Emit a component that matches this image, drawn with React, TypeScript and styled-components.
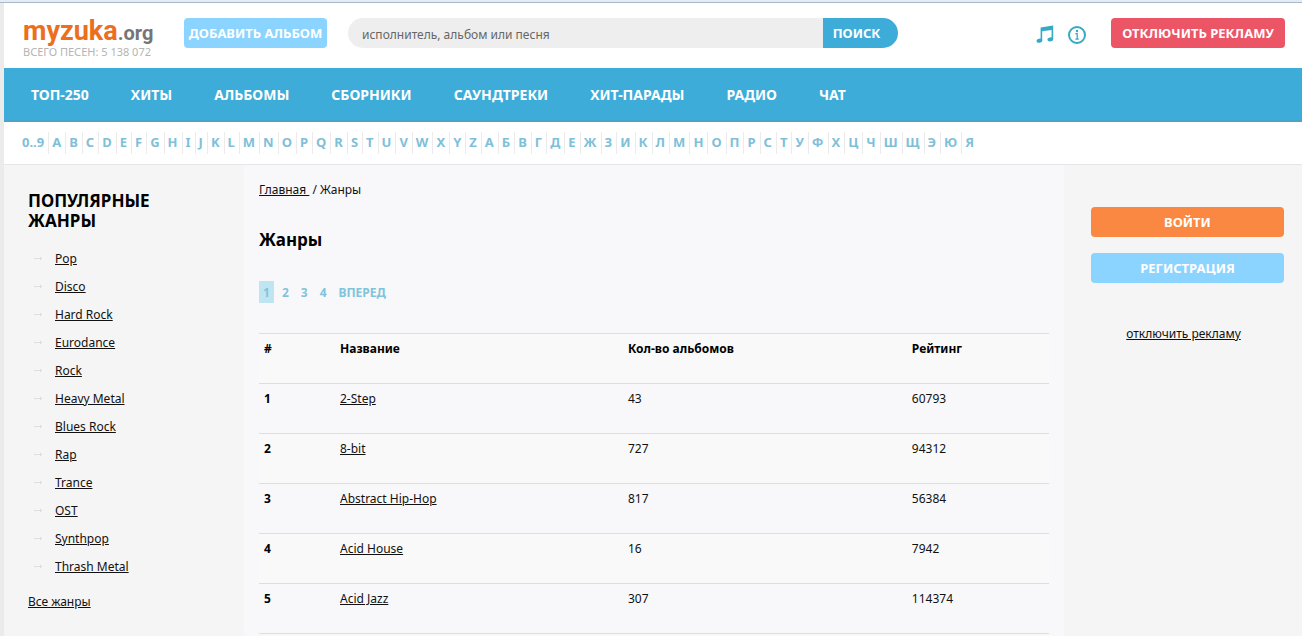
import React from 'react';
import styled, { createGlobalStyle } from 'styled-components';

const GlobalStyle = createGlobalStyle`
  *, *::before, *::after { box-sizing: border-box; }
  html, body { margin: 0; padding: 0; }
  html { overflow: hidden; }
  body {
    background: #f5f5f5;
    color: #111;
    font: 12px/18px "Noto Sans", "Open Sans", sans-serif;
  }
  a { color: inherit; }
  button, input { font-family: inherit; }
`;

const Page = styled.div`
  min-height: 100vh;
  display: flex;
  flex-direction: column;
  border-left: 4px solid #ebebeb;
`;

const WindowEdge = styled.div`
  height: 3px;
  margin-left: -4px;
  background: #e4ebf3;
  border-bottom: 1px solid #a9b8cb;
`;

const Header = styled.header`
  display: flex;
  align-items: flex-start;
  height: 65px;
  padding: 15px 17px 0 19px;
  background: #fff;
`;

const Brand = styled.div`
  width: 161px;
  flex: none;
`;

const Logo = styled.a`
  display: block;
  height: 28px;
  color: #ec6f20;
  font: bold 27px/26px Roboto, "Open Sans", sans-serif;
  text-decoration: none;
  white-space: nowrap;
`;

const LogoSuffix = styled.span`
  color: #757575;
  font-size: 20px;
`;

const SongCount = styled.div`
  color: #b4b4b4;
  font-size: 11px;
  line-height: 12px;
  white-space: nowrap;
`;

const Button = styled.button<{ $color: string; $width?: string }>`
  width: ${({ $width }) => $width ?? '100%'};
  height: 30px;
  flex: none;
  padding: 0;
  border: 0;
  border-radius: 4px;
  background: ${({ $color }) => $color};
  color: #fff;
  font-size: 13px;
  font-weight: 700;
  line-height: 30px;
  text-align: center;
  white-space: nowrap;
  cursor: pointer;
`;

const Search = styled.form`
  display: flex;
  width: 550px;
  height: 30px;
  margin-left: 21px;
  border-radius: 15px;
  overflow: hidden;
`;

const SearchInput = styled.input`
  flex: 1;
  min-width: 0;
  padding: 2px 14px 0;
  border: 0;
  background: #eee;
  font-size: 12px;
  &::placeholder { color: #666; opacity: 1; }
`;

const SearchButton = styled.button`
  width: 75px;
  padding: 0 8px 0 0;
  border: 0;
  background: #3eacd9;
  color: #fff;
  font-size: 13px;
  font-weight: 700;
  cursor: pointer;
`;

const HeaderTools = styled.div`
  display: flex;
  align-items: flex-start;
  margin-left: auto;
`;

const IconLink = styled.a`
  display: block;
  height: 20px;
  margin: 7px 13px 0 0;
  & + & { margin-right: 24px; }
  svg { display: block; }
`;

const Nav = styled.nav`
  display: flex;
  gap: 42px;
  height: 54px;
  padding: 0 27px;
  background: #3eacd9;
  border-bottom: 2px solid #4ba3c9;
`;

const NavLink = styled.a`
  color: #fff;
  font-size: 14px;
  font-weight: 700;
  line-height: 54px;
  text-decoration: none;
  white-space: nowrap;
`;

const Alphabet = styled.nav`
  display: flex;
  height: 43px;
  padding: 10px 14px 0;
  background: #fff;
  border-bottom: 1px solid #e6e6ea;
`;

const Letter = styled.a`
  height: 22px;
  padding: 0 4px 0 3px;
  border-left: 1px solid #ebebeb;
  color: #7fc0d8;
  font-size: 13px;
  font-weight: 700;
  line-height: 20px;
  text-decoration: none;
  &:first-child { border-color: transparent; }
`;

const Content = styled.div`
  display: flex;
  flex: 1;
`;

const Sidebar = styled.aside`
  width: 240px;
  flex: none;
  padding: 26px 24px;
`;

const SidebarTitle = styled.h2`
  margin: 0 0 14px;
  padding-right: 56px;
  color: #000;
  font-size: 17px;
  line-height: 20px;
`;

const GenreList = styled.ul`
  margin: 0;
  padding: 0;
  list-style: none;
`;

const GenreItem = styled.li`
  display: flex;
  align-items: center;
  gap: 12px;
  height: 28px;
  padding-left: 5px;
  svg { flex: none; }
`;

const AllGenres = styled.a`
  display: inline-block;
  margin-top: 12px;
`;

const Main = styled.main`
  flex: 1;
  min-width: 0;
  padding: 16px 15px 0;
  background: #f8f8fb;
`;

const Crumbs = styled.nav`
  a { white-space: pre; }
`;

const Title = styled.h1`
  margin: 29px 0 0;
  color: #000;
  font-size: 17px;
  line-height: 24px;
`;

const Pager = styled.nav`
  display: flex;
  gap: 4px;
  margin: 29px 0 30px;
`;

const PageLink = styled.a<{ $current?: boolean }>`
  height: 22px;
  padding: 0 4px;
  background: ${({ $current }) => ($current ? '#bfe5f3' : 'transparent')};
  color: #7fc4da;
  font-size: 12px;
  font-weight: 700;
  line-height: 24px;
  text-decoration: none;
`;

const GenreTable = styled.table`
  width: 100%;
  table-layout: fixed;
  border-collapse: separate;
  border-spacing: 0;
  border-bottom: 1px solid #dedee0;
  th, td {
    height: 50px;
    padding: 6px 5px 0;
    border-top: 1px solid #dedee0;
    text-align: left;
    vertical-align: top;
  }
  th { color: #000; }
  thead th, tbody tr:nth-child(even) > * { background: #f9f9f9; }
`;

const Col = styled.col<{ $width?: string }>`
  width: ${({ $width }) => $width ?? 'auto'};
`;

const Account = styled.aside`
  display: flex;
  flex-direction: column;
  gap: 16px;
  width: 238px;
  flex: none;
  padding: 42px 18px 0 27px;
`;

const DisableAds = styled.a`
  margin-top: 26px;
  padding-right: 8px;
  text-align: center;
`;

const NAV = ['ТОП-250', 'ХИТЫ', 'АЛЬБОМЫ', 'СБОРНИКИ', 'САУНДТРЕКИ', 'ХИТ-ПАРАДЫ', 'РАДИО', 'ЧАТ'];
const LETTERS = ['0..9', ...'ABCDEFGHIJKLMNOPQRSTUVWXYZ', ...'АБВГДЕЖЗИКЛМНОПРСТУФХЦЧШЩЭЮЯ'];
const GENRES = [
  'Pop', 'Disco', 'Hard Rock', 'Eurodance', 'Rock', 'Heavy Metal',
  'Blues Rock', 'Rap', 'Trance', 'OST', 'Synthpop', 'Thrash Metal',
];
const ROWS: [string, number, number][] = [
  ['2-Step', 43, 60793],
  ['8-bit', 727, 94312],
  ['Abstract Hip-Hop', 817, 56384],
  ['Acid House', 16, 7942],
  ['Acid Jazz', 307, 114374],
];

const MusicIcon = () => (
  <svg width="18" height="20" viewBox="0 0 18 20" aria-hidden="true">
    <path d="M4.6 2.4 17.2.6V14h-1.6V5L6.200 6.300V15.500H4.600Z" fill="#36a9c4" />
    <ellipse cx="3.400" cy="15.700" rx="2.900" ry="2" transform="rotate(-14 3.400 15.700)" fill="#36a9c4" />
    <ellipse cx="14.300" cy="14.400" rx="2.900" ry="2" transform="rotate(-14 14.300 14.400)" fill="#36a9c4" />
  </svg>
);

const InfoIcon = () => (
  <svg width="20" height="20" viewBox="0 0 20 20" fill="none" aria-hidden="true">
    <circle cx="10" cy="10" r="8" stroke="#36a9c4" strokeWidth="2" />
    <circle cx="10" cy="6" r="1.200" fill="#36a9c4" />
    <path d="M8.400 8.600h1.800V14M8.400 14.200h3.400" stroke="#36a9c4" strokeWidth="1.300" />
  </svg>
);

const Arrow = () => (
  <svg width="10" height="6" viewBox="0 0 10 6" fill="none" aria-hidden="true">
    <path d="M1 2.500h8M7 1l1.800 1.500L7 4" stroke="#dedede" />
  </svg>
);

export default function App() {
  return (
    <>
      <GlobalStyle />
      <Page>
        <WindowEdge />
        <Header>
          <Brand>
            <Logo href="#">myzuka<LogoSuffix>.org</LogoSuffix></Logo>
            <SongCount>ВСЕГО ПЕСЕН: 5 138 072</SongCount>
          </Brand>
          <Button type="button" $color="#8ad4ff" $width="143px">ДОБАВИТЬ АЛЬБОМ</Button>
          <Search onSubmit={(e) => e.preventDefault()}>
            <SearchInput type="text" aria-label="Поиск" placeholder="исполнитель, альбом или песня" />
            <SearchButton type="submit">ПОИСК</SearchButton>
          </Search>
          <HeaderTools>
            <IconLink href="#" aria-label="Музыка"><MusicIcon /></IconLink>
            <IconLink href="#" aria-label="Информация"><InfoIcon /></IconLink>
            <Button type="button" $color="#ec5565" $width="174px">ОТКЛЮЧИТЬ РЕКЛАМУ</Button>
          </HeaderTools>
        </Header>
        <Nav>
          {NAV.map((item) => <NavLink key={item} href="#">{item}</NavLink>)}
        </Nav>
        <Alphabet>
          {LETTERS.map((letter) => <Letter key={letter} href="#">{letter}</Letter>)}
        </Alphabet>
        <Content>
          <Sidebar>
            <SidebarTitle>ПОПУЛЯРНЫЕ ЖАНРЫ</SidebarTitle>
            <GenreList>
              {GENRES.map((genre) => (
                <GenreItem key={genre}><Arrow /><a href="#">{genre}</a></GenreItem>
              ))}
            </GenreList>
            <AllGenres href="#">Все жанры</AllGenres>
          </Sidebar>
          <Main>
            <Crumbs><a href="#">{'Главная '}</a> / Жанры</Crumbs>
            <Title>Жанры</Title>
            <Pager>
              <PageLink href="#" $current>1</PageLink>
              <PageLink href="#">2</PageLink>
              <PageLink href="#">3</PageLink>
              <PageLink href="#">4</PageLink>
              <PageLink href="#">ВПЕРЕД</PageLink>
            </Pager>
            <GenreTable>
              <colgroup>
                <Col $width="76px" />
                <Col $width="288px" />
                <Col />
                <Col $width="18%" />
              </colgroup>
              <thead>
                <tr>
                  <th scope="col">#</th>
                  <th scope="col">Название</th>
                  <th scope="col">Кол-во альбомов</th>
                  <th scope="col">Рейтинг</th>
                </tr>
              </thead>
              <tbody>
                {ROWS.map(([name, albums, rating], i) => (
                  <tr key={name}>
                    <th scope="row">{i + 1}</th>
                    <td><a href="#">{name}</a></td>
                    <td>{albums}</td>
                    <td>{rating}</td>
                  </tr>
                ))}
              </tbody>
            </GenreTable>
          </Main>
          <Account>
            <Button type="button" $color="#fa8843">ВОЙТИ</Button>
            <Button type="button" $color="#8ad4ff">РЕГИСТРАЦИЯ</Button>
            <DisableAds href="#">отключить рекламу</DisableAds>
          </Account>
        </Content>
      </Page>
    </>
  );
}
